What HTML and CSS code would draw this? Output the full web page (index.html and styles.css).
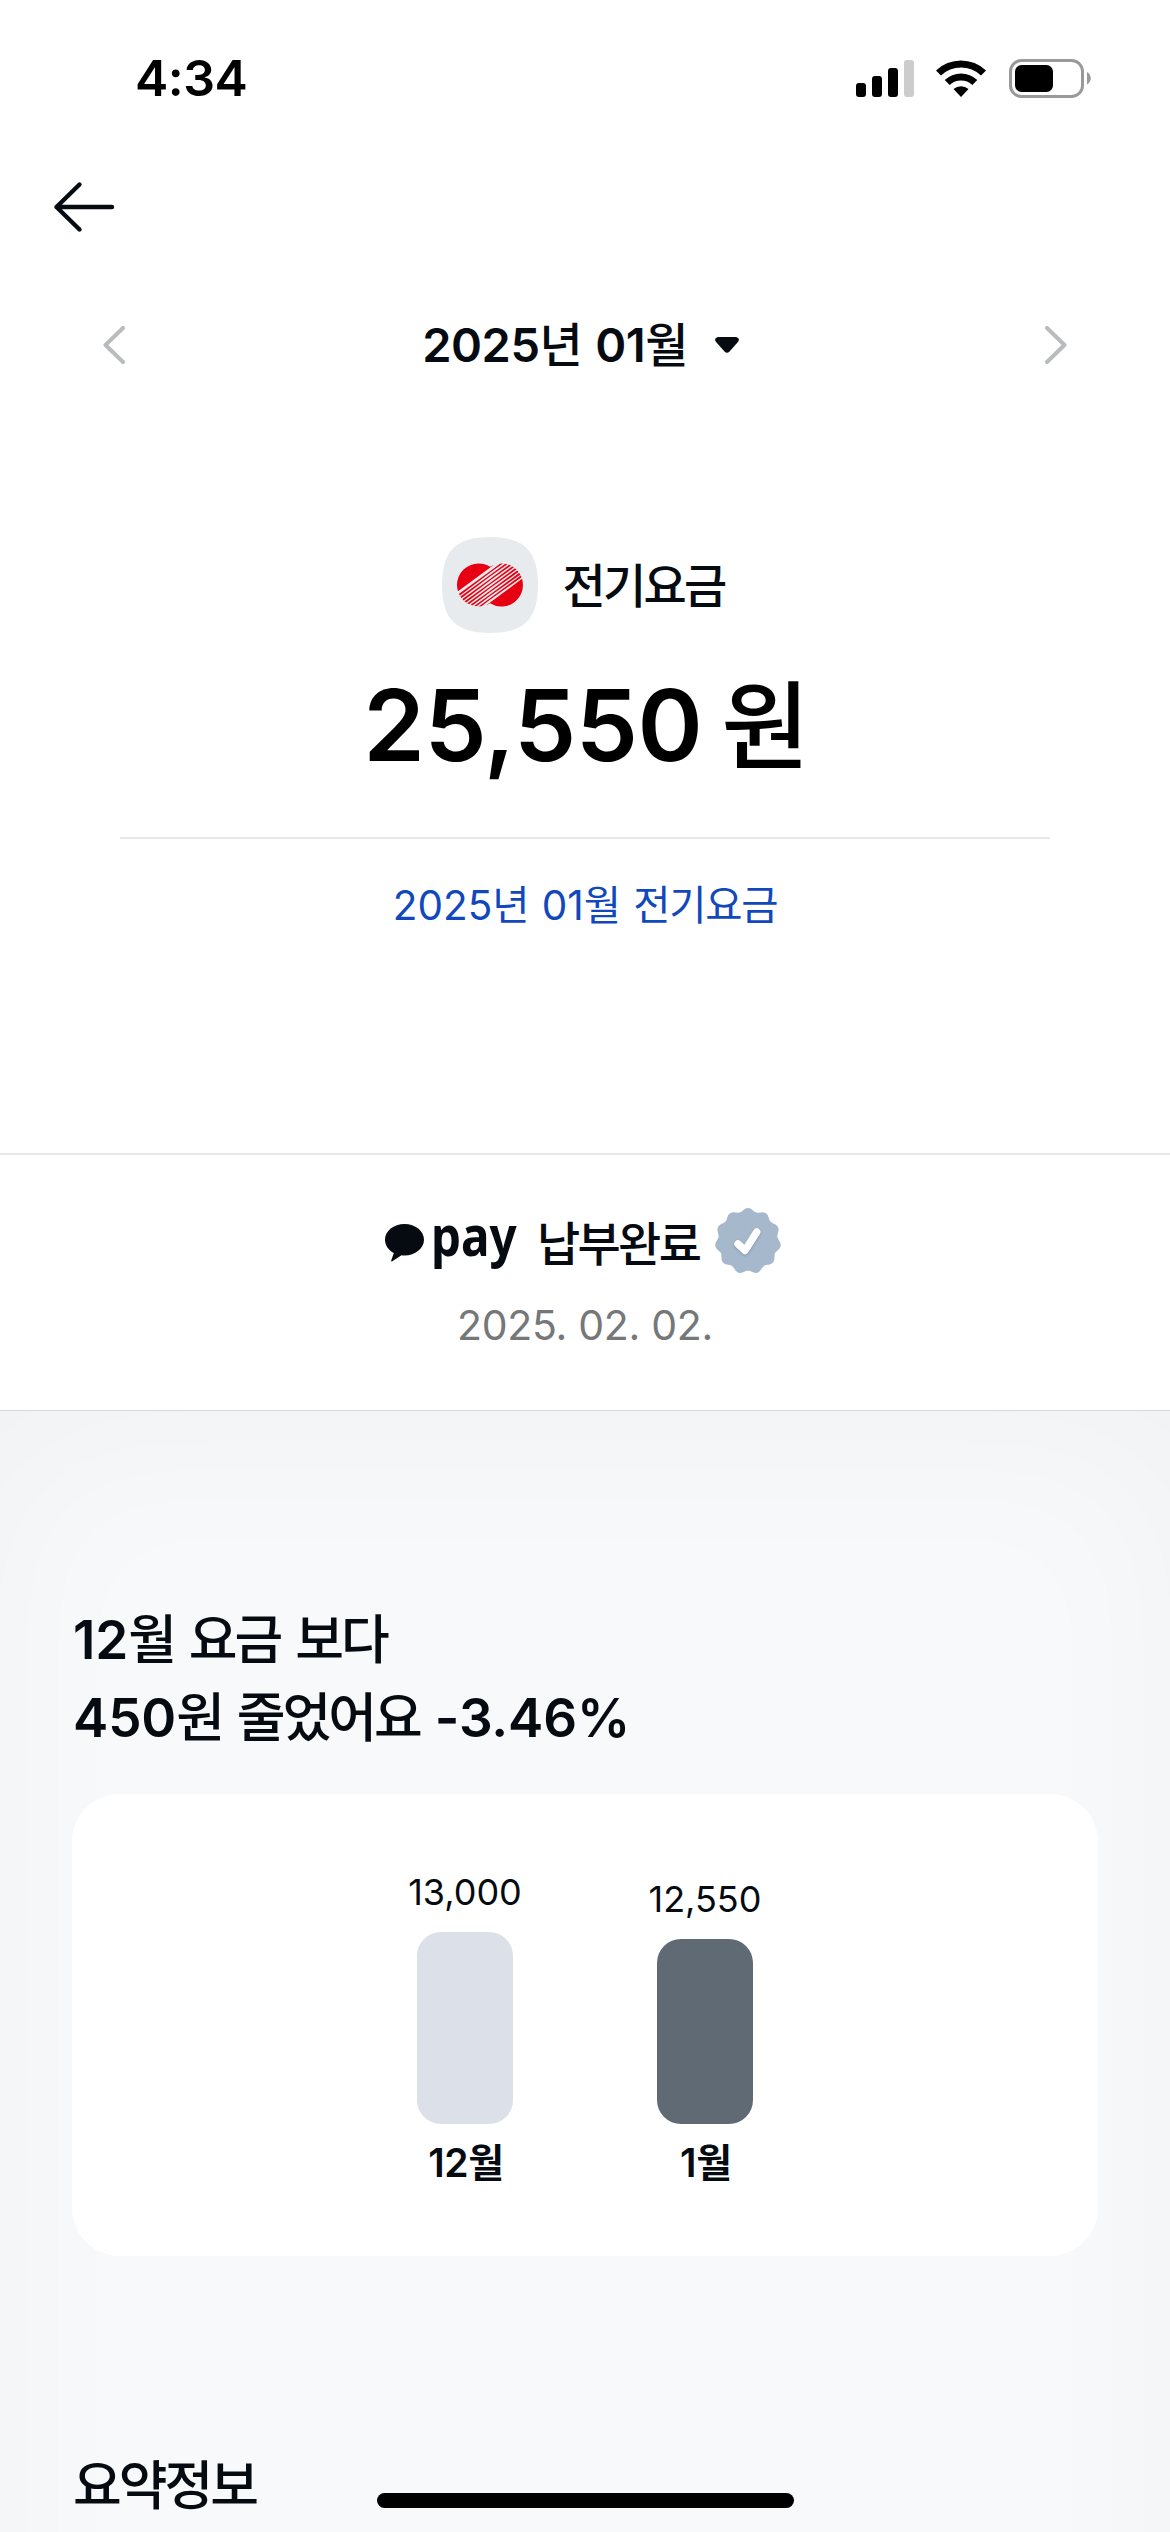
FILE: index.html
```html
<!DOCTYPE html>
<html lang="ko">
<head>
<meta charset="utf-8">
<title>전기요금</title>
<link rel="stylesheet" href="styles.css">
</head>
<body>
<div class="screen">
  <header class="status-bar">
    <span class="clock">4:34</span>
    <div class="status-icons">
      <svg class="signal" width="58" height="37" viewBox="0 0 58 37"><rect x="0" y="23" width="10" height="14" rx="3"/><rect x="16" y="16" width="10" height="21" rx="3"/><rect x="32" y="8" width="10" height="29" rx="3"/><rect x="48" y="0" width="10" height="37" rx="3" fill="#ccc"/></svg>
      <svg class="wifi" width="50" height="37" viewBox="0 0 50 37"><path d="M0 10.5A36 36 0 0 1 50 10.5L45 15.5A29 29 0 0 0 5 15.5Z"/><path d="M8.700 20A23.500 23.500 0 0 1 41.300 20L36.300 25A16.500 16.500 0 0 0 13.700 25Z"/><path d="M17.500 29A11.500 11.500 0 0 1 32.500 29L25 37Z"/></svg>
      <svg class="battery" width="82" height="39" viewBox="0 0 82 39"><rect x="1.500" y="1.500" width="72" height="36" rx="11" fill="none" stroke="#999" stroke-width="3"/><rect x="6" y="6" width="38" height="27" rx="6.500"/><path d="M78 13C83 15.500 83 23 78 25.500Z" fill="#999"/></svg>
    </div>
  </header>
  <nav class="nav-bar">
    <svg width="62" height="52" viewBox="0 0 62 52" fill="none" stroke="#060b11" stroke-width="4.400" stroke-linecap="round" stroke-linejoin="round"><path d="M26.500 3.500L3.500 26L26.500 48.500M3.500 26H59"/></svg>
  </nav>
  <div class="month-picker">
    <svg class="chevron" width="22" height="38" viewBox="0 0 22 38"><path d="M20 2L2.500 19L20 36"/></svg>
    <div class="month">
      <div><span class="num">2025</span><span class="kor">년 </span><span class="num">01</span><span class="kor">월</span></div>
      <svg width="24" height="16" viewBox="0 0 24 16"><path d="M3 0H21Q26 1 22.500 5.500L14.500 14.500Q12 17 9.500 14.500L1.500 5.500Q-2 1 3 0Z" fill="#060b11"/></svg>
    </div>
    <svg class="chevron" width="22" height="38" viewBox="0 0 22 38"><path d="M2 2L19.500 19L2 36"/></svg>
  </div>
  <section class="bill">
    <div class="bill-name">
      <svg width="96" height="96" viewBox="0 0 96 96">
        <defs>
          <clipPath id="rings"><path d="M36.500 26.500A21.500 21.500 0 1 0 36.500 69.500A21.500 21.500 0 0 0 48 66.200A21.500 21.500 0 1 0 48 29.800A21.500 21.500 0 0 0 36.500 26.500Z"/></clipPath>
          <path id="stripe" d="M12 56.100L48 30L84 3.200V5.900L48 31.500L12 58.800Z"/>
        </defs>
        <path d="M48 0C82 0 96 14 96 48S82 96 48 96S0 82 0 48S14 0 48 0Z" fill="#e8ebee"/>
        <g clip-path="url(#rings)" fill="#e60012">
          <path d="M10 58.600L52 27.800V20H10Z"/>
          <path d="M44 68.500L90 34.300V80H44Z"/>
          <use href="#stripe" y="4.200"/><use href="#stripe" y="8.100"/><use href="#stripe" y="12"/><use href="#stripe" y="15.900"/><use href="#stripe" y="19.800"/><use href="#stripe" y="23.700"/><use href="#stripe" y="27.600"/><use href="#stripe" y="31.300"/>
        </g>
      </svg>
      <span class="kor">전기요금</span>
    </div>
    <div class="amount"><span class="num">25,550</span><span class="kor">원</span></div>
    <div class="bill-link"><span class="num">2025</span><span class="kor">년 </span><span class="num">01</span><span class="kor">월 전기요금</span></div>
  </section>
  <section class="payment">
    <div class="paid">
      <svg class="bubble" width="39" height="38" viewBox="0 0 39 38"><path d="M19.500 0C8.700 0 0 7 0 15.700C0 21.300 3.500 26.200 8.800 29L6.200 36.600Q6 38 7.300 37.300L16.500 31.200Q18 31.400 19.500 31.400C30.300 31.400 39 24.400 39 15.700S30.300 0 19.500 0Z" fill="#060b11"/></svg>
      <span class="pay">pay</span>
      <span class="kor">납부완료</span>
      <svg class="badge" width="66" height="66" viewBox="-33 -33 66 66">
        <defs><path id="petal" d="M0 0L-8.400 -28.500C-5.100 -29.500 -4 -33 0 -33S5.100 -29.500 8.400 -28.500Z"/></defs>
        <g fill="#a6b8cb"><circle r="29"/><use href="#petal"/><use href="#petal" transform="rotate(32.727)"/><use href="#petal" transform="rotate(65.455)"/><use href="#petal" transform="rotate(98.182)"/><use href="#petal" transform="rotate(130.909)"/><use href="#petal" transform="rotate(163.636)"/><use href="#petal" transform="rotate(196.364)"/><use href="#petal" transform="rotate(229.091)"/><use href="#petal" transform="rotate(261.818)"/><use href="#petal" transform="rotate(294.545)"/><use href="#petal" transform="rotate(327.273)"/></g>
        <path class="check" d="M-10 3L-3 9.500L8.800 -9" fill="none" stroke="#fff" stroke-width="7.400" stroke-linecap="round" stroke-linejoin="round"/>
      </svg>
    </div>
    <div class="paid-date">2025. 02. 02.</div>
  </section>
  <main class="report">
    <h2 class="heading"><span class="num">12</span><span class="kor">월 요금 보다</span><br><span class="num">450</span><span class="kor">원 줄었어요 </span><span class="num">-3.46%</span></h2>
    <div class="card">
      <div class="bar-group">
        <span class="value">13,000</span>
        <div class="bar" style="height:192px"></div>
        <div class="bar-label"><span class="num">12</span><span class="kor">월</span></div>
      </div>
      <div class="bar-group current">
        <span class="value">12,550</span>
        <div class="bar" style="height:185px"></div>
        <div class="bar-label"><span class="num">1</span><span class="kor">월</span></div>
      </div>
    </div>
    <h2 class="heading summary"><span class="kor">요약정보</span></h2>
  </main>
  <div class="home-indicator"></div>
</div>
</body>
</html>
```

FILE: styles.css
```css
* { box-sizing: border-box; margin: 0; }
body {
  background: #fff;
  color: #060b11;
  font-family: Inter, "Noto Sans CJK KR", sans-serif;
  white-space: nowrap;
}
svg { display: block; flex: none; }
.kor {
  font-family: "Noto Sans CJK KR", sans-serif;
  font-weight: 500;
  line-height: 0;
  letter-spacing: -.057em;
  word-spacing: .1em;
  white-space: pre;
}
.num { font-weight: 600; letter-spacing: -.01em; }
.screen {
  position: relative;
  width: 1170px;
  height: 2532px;
  overflow: hidden;
  display: flex;
  flex-direction: column;
}
.status-bar {
  height: 156px;
  flex: none;
  display: flex;
  justify-content: space-between;
  padding: 0 79px 0 135px;
  color: #000;
}
.clock { font-size: 50px; font-weight: 600; line-height: 156px; letter-spacing: -.5px; }
.status-icons { display: flex; align-items: center; gap: 22px; }
.battery { margin-left: 1px; }
.nav-bar { height: 130px; flex: none; padding: 25px 53px; }
.month-picker {
  height: 118px;
  flex: none;
  display: flex;
  align-items: center;
  justify-content: space-between;
  padding: 0 103px;
}
.chevron { fill: none; stroke: #b9bbbc; stroke-width: 4; stroke-linecap: round; stroke-linejoin: round; }
.month { display: flex; align-items: center; line-height: 60px; font-size: 47px; }
.month svg { margin: 0 9px 0 29px; }
.bill { height: 749px; flex: none; padding: 133px 120px 0; }
.bill-name { display: flex; align-items: center; justify-content: center; gap: 24px; height: 96px; padding-right: 3px; font-size: 47px; }
.bill-name .kor { line-height: 60px; padding-bottom: 5px; }
.amount { height: 206px; border-bottom: 2px solid #e7e8e9; text-align: center; font-size: 99px; line-height: 184px; color: #000; }
.amount .num { letter-spacing: -.005em; }
.amount .kor { font-size: 96px; margin-left: 19px; letter-spacing: -3px; }
.bill-link { text-align: center; font-size: 40.500px; line-height: 134px; color: #1148bc; }
.bill-link .num { font-weight: 400; letter-spacing: 0; }
.bill-link .kor { font-weight: 400; letter-spacing: -.03em; word-spacing: .08em; }
.payment { height: 258px; flex: none; border-top: 2px solid #e7e8e9; border-bottom: 1px solid #d9d9d9; padding-top: 53px; }
.paid { display: flex; align-items: center; height: 66px; padding-left: 385px; font-size: 47px; }
.bubble { margin-top: 4px; }
.pay {
  width: 83px;
  margin-left: 7px;
  font-family: "Noto Sans", sans-serif;
  font-weight: 700;
  font-size: 56px;
  line-height: 66px;
  padding-bottom: 14px;
  transform: scaleX(.85);
  transform-origin: left;
}
.paid .kor { width: 162px; margin-left: 23px; line-height: 66px; }
.badge { margin-left: 16px; }
.check { filter: drop-shadow(0 1.500px 1px #7f93aa); }
.paid-date { text-align: center; font-size: 41px; line-height: 102px; letter-spacing: -.3px; color: #757779; }
.report {
  height: 1400px;
  flex: none;
  background: #f8f9fb;
  box-shadow: inset 0 30px 170px rgba(0, 0, 0, .032);
  padding: 190px 72px 0;
}
.heading { font-size: 53px; line-height: 78px; font-weight: 600; padding-left: 1px; }
.heading .kor { word-spacing: .06em; }
.heading .num { letter-spacing: -.003em; }
.card { height: 462px; margin-top: 37px; border-radius: 48px; background: #fff; display: flex; justify-content: center; align-items: flex-end; gap: 100px; padding-bottom: 62px; }
.bar-group { width: 140px; display: flex; flex-direction: column; align-items: center; }
.value { font-size: 36px; line-height: 50px; margin-bottom: 15px; }
.bar { width: 96px; border-radius: 24px; background: #dce0e8; }
.current .bar { background: #606a74; }
.bar-label { height: 70px; line-height: 78px; font-size: 39px; }
.bar-label .kor { font-weight: 700; }
.summary { margin-top: 191px; }
.home-indicator { position: absolute; left: 377px; top: 2493px; width: 417px; height: 15px; border-radius: 8px; background: #000; }
```
